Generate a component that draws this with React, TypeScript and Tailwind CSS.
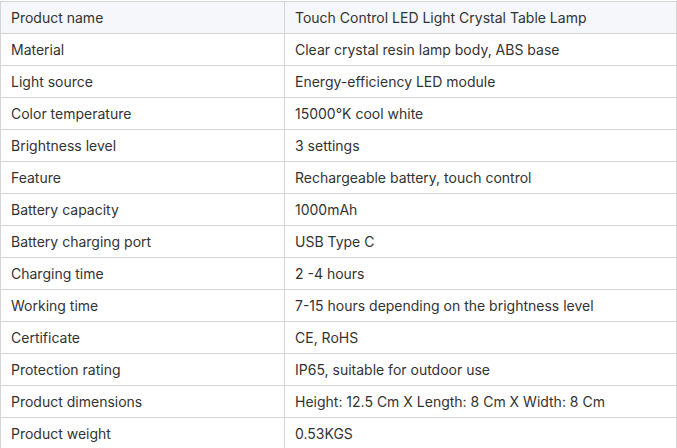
const rows: [string, string][] = [
  ["Product name", "Touch Control LED Light Crystal Table Lamp"],
  ["Material", "Clear crystal resin lamp body, ABS base"],
  ["Light source", "Energy-efficiency LED module"],
  ["Color temperature", "15000°K cool white"],
  ["Brightness level", "3 settings"],
  ["Feature", "Rechargeable battery, touch control"],
  ["Battery capacity", "1000mAh"],
  ["Battery charging port", "USB Type C"],
  ["Charging time", "2 -4 hours"],
  ["Working time", "7-15 hours depending on the brightness level"],
  ["Certificate", "CE, RoHS"],
  ["Protection rating", "IP65, suitable for outdoor use"],
  ["Product dimensions", "Height: 12.5 Cm X Length: 8 Cm X Width: 8 Cm"],
  ["Product weight", "0.53KGS"],
];

export default function App() {
  return (
    <div className="w-[677px] h-[448px] overflow-hidden bg-white pt-px font-['Inter',sans-serif] text-[14px] text-[#333]">
      <div className="border-t border-l border-r border-[#d4d4d4]">
        {rows.map(([label, value], i) => (
          <div
            key={label}
            className={`flex h-[32px] items-center border-b border-[#d4d4d4] ${i === 0 ? "bg-[#f5f7fa]" : "bg-white"}`}
          >
            <div className="w-[284px] h-full flex items-center px-[10px] border-r border-[#d4d4d4]">{label}</div>
            <div className="flex-1 px-[10px]">{value}</div>
          </div>
        ))}
      </div>
    </div>
  );
}
